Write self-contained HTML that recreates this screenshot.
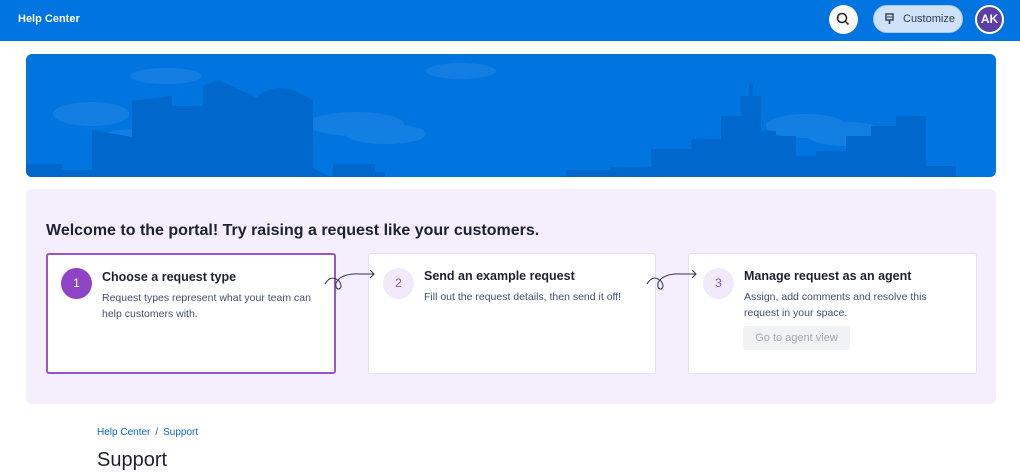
<!DOCTYPE html><html><head><style>
*{margin:0;padding:0;box-sizing:border-box}
body{width:1020px;height:466px;overflow:hidden;background:#fff;font-family:"Liberation Sans",sans-serif;position:relative}
.top{height:41px;background:#0074e0;position:relative}
.top .t{position:absolute;left:18px;top:13px;color:#fff;font-weight:bold;font-size:11px}
.srch{position:absolute;left:829px;top:5px;width:29px;height:29px;border-radius:50%;background:#fff}
.cust{position:absolute;left:873px;top:5px;width:90px;height:28px;border-radius:14px;background:#cfe1f7;border:1px solid #a9c8ee;font-size:11px;color:#2a3a55;padding:7px 0 0 29px}
.av{position:absolute;left:975px;top:5px;width:29px;height:29px;border-radius:50%;background:#5b3fa8;border:2px solid #fff;color:#fff;font-size:12px;font-weight:bold;text-align:center;line-height:25px}
.ban{position:absolute;left:26px;top:54px;width:970px;height:123px;border-radius:6px;background:#0075e0;overflow:hidden}
.pan{position:absolute;left:26px;top:189px;width:970px;height:215px;border-radius:6px;background:#f5eefd}
h2{position:absolute;left:46px;top:222px;font-size:16px;color:#1d2230}
.card{position:absolute;top:253px;height:121px;background:#fff;border:1px solid #e6e0ee;border-radius:3px}
.c1{border:2px solid #9b55cc}
.num{position:absolute;left:14px;top:14px;width:31px;height:31px;border-radius:50%;background:#f2e9fb;color:#8a55c0;font-size:12px;text-align:center;line-height:31px}
.c1 .num{background:#8e44c4;color:#fff;left:13px;top:13px}
.ct{position:absolute;left:55px;top:15px;font-weight:bold;font-size:12.5px;color:#1d2230}
.c1 .ct,.c1 .cd{left:54px}
.cd{position:absolute;left:55px;top:35px;font-size:10.5px;color:#44506a;line-height:16px;width:210px}
.btn{position:absolute;left:54px;top:72px;width:107px;height:24px;background:#f1f2f4;color:#a3a8b2;font-size:11px;text-align:center;line-height:24px;border-radius:3px}
.bc{position:absolute;left:97px;top:427px;font-size:10px;color:#0c66c8}
.bc span{color:#44506a;margin:0 5px}
.sup{position:absolute;left:97px;top:449px;font-size:20px;color:#1d2230}
</style></head><body>
<div class="top"><div class="t">Help Center</div>
<div class="srch"><svg width="29" height="29"><circle cx="13" cy="13" r="4.5" fill="none" stroke="#222" stroke-width="1.6"/><line x1="16.3" y1="16.3" x2="19.5" y2="19.5" stroke="#222" stroke-width="1.6"/></svg></div>
<div class="cust"><svg style="position:absolute;left:11px;top:7px" width="10" height="12"><rect x="1" y="1" width="7" height="6" fill="none" stroke="#2a3a55" stroke-width="1.4"/><line x1="2" y1="4" x2="7" y2="4" stroke="#2a3a55"/><line x1="4.5" y1="7" x2="4.5" y2="11" stroke="#2a3a55" stroke-width="1.6"/></svg>Customize</div>
<div class="av">AK</div></div>
<div class="ban"><svg width="970" height="123">
<g fill="#ffffff" opacity=".07"><ellipse cx="140" cy="22" rx="36" ry="8"/><ellipse cx="65" cy="60" rx="38" ry="12"/><ellipse cx="110" cy="85" rx="38" ry="10"/><ellipse cx="330" cy="70" rx="48" ry="12"/><ellipse cx="360" cy="80" rx="40" ry="10"/><ellipse cx="435" cy="17" rx="35" ry="8"/><ellipse cx="780" cy="72" rx="40" ry="12"/><ellipse cx="820" cy="80" rx="40" ry="12"/></g>
<path fill="#0068cc" d="M0 110h36v6h30v-40l40 7v-36l40-5v10h31v-20l15-6l40 18v-3q20-12 40-3l15 8v68l20 10v-14h42v8h10v19h41v-9h60v5h45v-10h35v-7h45v-3h40v-18h40v-10h35v15h10v-15q15-10 40-8v5h20v20h20v-5h30v-15h25v-10h25v-10h30v50h30v15h20v30H0z"/>
<path fill="#0068cc" d="M695 62h20v-20h8v-12h4v12h8v82h-40z"/>
</svg></div>
<div class="pan"></div>
<h2>Welcome to the portal! Try raising a request like your customers.</h2>
<div class="card c1" style="left:46px;width:290px"><div class="num">1</div><div class="ct">Choose a request type</div><div class="cd">Request types represent what your team can help customers with.</div></div>
<div class="card" style="left:368px;width:288px"><div class="num">2</div><div class="ct">Send an example request</div><div class="cd" style="width:230px">Fill out the request details, then send it off!</div></div>
<div class="card" style="left:688px;width:289px"><div class="num">3</div><div class="ct">Manage request as an agent</div><div class="cd">Assign, add comments and resolve this request in your space.</div><div class="btn">Go to agent view</div></div>
<svg style="position:absolute;left:322px;top:268px" width="60" height="30"><path d="M3 16q6-10 14-3q4 6 0 8q-4 0-3-6q5-10 24-9h14M48 2l4 4l-4 4" fill="none" stroke="#2a3350" stroke-width="1"/></svg>
<svg style="position:absolute;left:644px;top:268px" width="60" height="30"><path d="M3 16q6-10 14-3q4 6 0 8q-4 0-3-6q5-10 24-9h14M48 2l4 4l-4 4" fill="none" stroke="#2a3350" stroke-width="1"/></svg>
<div class="bc">Help Center<span>/</span>Support</div>
<div class="sup">Support</div>
</body></html>
